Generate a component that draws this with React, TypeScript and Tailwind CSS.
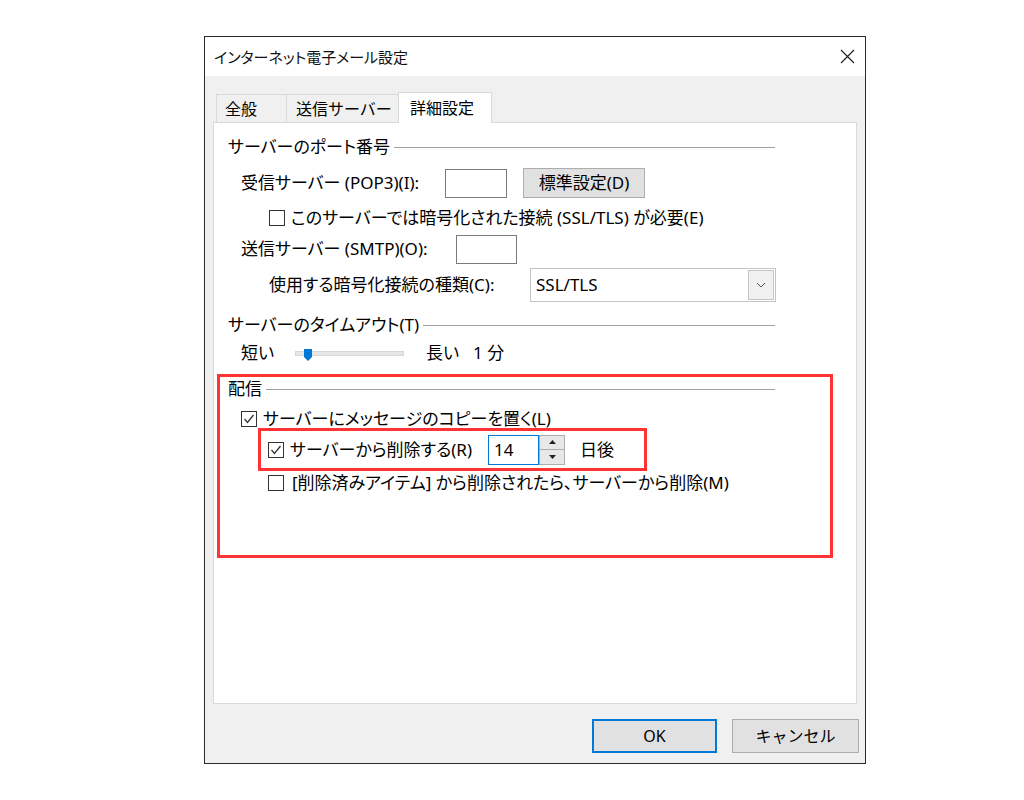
import React from 'react';

// インターネット電子メール設定 — 詳細設定タブ

function GroupHeader({ title }: { title: string }) {
  return (
    <div className="flex items-center h-[20px] w-[547px]">
      <span className="whitespace-nowrap leading-[20px]">{title}</span>
      <div className="flex-1 h-px bg-[#a0a0a0] ml-[4px]" />
    </div>
  );
}

function CheckBox({ checked = false }: { checked?: boolean }) {
  return (
    <span className="w-[16px] h-[16px] shrink-0 border border-[#333333] bg-white flex items-center justify-center">
      {checked && (
        <svg width="12" height="12" viewBox="0 0 12 12">
          <polyline points="1.5,6 4.5,9.5 10.5,2" fill="none" stroke="#333333" strokeWidth="1.3" />
        </svg>
      )}
    </span>
  );
}

export default function App() {
  return (
    <div className="w-[1024px] h-[800px] bg-white pt-[36px] pl-[204px] text-[16px] text-black font-['Noto_Sans','Noto_Sans_CJK_JP',sans-serif]">
      <div className="w-[662px] h-[728px] border border-[#2b2b2b] flex flex-col bg-[#f0f0f0]">
        {/* ── Title bar ── */}
        <div className="h-[39px] shrink-0 bg-white flex items-center justify-between pl-[9px] pr-[10px]">
          <span className="text-[15px] leading-[20px] text-[#111] [font-feature-settings:'palt']">インターネット電子メール設定</span>
          <svg width="15" height="15" viewBox="0 0 15 15">
            <path d="M1 1 L14 14 M14 1 L1 14" stroke="#222" strokeWidth="1.2" />
          </svg>
        </div>

        {/* ── Tabs + panel ── */}
        <div className="flex flex-col px-[8px] pt-[16px]">
          <div className="flex items-end h-[30px] pl-[3px]">
            <div className="h-[28px] w-[71px] border-t border-l border-r border-[#d9d9d9] pl-[8px] flex items-center leading-[20px]">全般</div>
            <div className="h-[28px] w-[111px] border-t border-[#d9d9d9] pl-[9px] flex items-center leading-[20px] whitespace-nowrap">送信サーバー</div>
            <div className="relative z-10 h-[31px] -mb-[1px] w-[94px] border-t border-l border-r border-[#d9d9d9] bg-white pl-[11px] flex items-center leading-[20px] whitespace-nowrap">詳細設定</div>
          </div>

          <div className="h-[582px] border border-[#d9d9d9] bg-white text-[17px] [font-feature-settings:'palt']">
            <div className="flex flex-col pl-[14px] pt-[14px]">
              <GroupHeader title="サーバーのポート番号" />

              <div className="flex items-center h-[30px] mt-[11px] pl-[13px]">
                <span className="w-[204px] whitespace-nowrap">受信サーバー (POP3)(I):</span>
                <span className="w-[62px] h-[29px] border border-[#7a7a7a] bg-white" />
                <button className="ml-[16px] w-[122px] h-[30px] bg-[#e1e1e1] border border-[#adadad] leading-[20px]">標準設定(D)</button>
              </div>

              <div className="flex items-center h-[20px] mt-[10px] pl-[41px]">
                <CheckBox />
                <span className="ml-[6px] whitespace-nowrap">このサーバーでは暗号化された接続 (SSL/TLS) が必要(E)</span>
              </div>

              <div className="flex items-center h-[30px] mt-[6px] pl-[13px]">
                <span className="w-[215px] whitespace-nowrap">送信サーバー (SMTP)(O):</span>
                <span className="w-[61px] h-[29px] border border-[#7a7a7a] bg-white" />
              </div>

              <div className="flex items-center h-[34px] mt-[4px] pl-[41px]">
                <span className="w-[261px] whitespace-nowrap">使用する暗号化接続の種類(C):</span>
                <div className="w-[246px] h-[34px] border border-[#c4c4c4] bg-white flex items-center">
                  <span className="flex-1 pl-[5px]">SSL/TLS</span>
                  <span className="w-[26px] h-[30px] mr-[1px] border border-[#c4c4c4] bg-[#f0f0f0] flex items-center justify-center">
                    <svg width="10" height="6" viewBox="0 0 10 6">
                      <polyline points="1,1 5,5 9,1" fill="none" stroke="#555" strokeWidth="1" />
                    </svg>
                  </span>
                </div>
              </div>

              <div className="mt-[13px]">
                <GroupHeader title="サーバーのタイムアウト(T)" />
              </div>

              <div className="flex items-center h-[20px] mt-[8px] pl-[13px]">
                <span className="w-[54px]">短い</span>
                <div className="relative w-[109px] h-[5px] bg-[#e7e7e7] border border-[#d6d6d6]">
                  <svg className="absolute left-[8px] -top-[3px]" width="8" height="12" viewBox="0 0 8 12">
                    <polygon points="0,0 8,0 8,8 4,12 0,8" fill="#0078d7" />
                  </svg>
                </div>
                <span className="ml-[22px]">長い</span>
                <span className="ml-[14px] whitespace-nowrap">1 分</span>
              </div>

              {/* ── 配信 (highlighted) ── */}
              <div className="mt-[11px] -ml-[11px] w-[616px] h-[184px] border-[3px] border-[#ff3333] pl-[8px] pt-[2px] flex flex-col">
                <GroupHeader title="配信" />

                <div className="flex items-center h-[18px] mt-[11px] pl-[13px]">
                  <CheckBox checked />
                  <span className="ml-[6px] whitespace-nowrap">サーバーにメッセージのコピーを置く(L)</span>
                </div>

                <div className="ml-[30px] w-[389px] h-[43px] shrink-0 border-[3px] border-[#ff3333] flex items-center pl-[7px]">
                  <CheckBox checked />
                  <span className="ml-[6px] w-[198px] whitespace-nowrap">サーバーから削除する(R)</span>
                  <div className="flex h-[30px]">
                    <span className="w-[51px] h-[30px] border border-[#0078d7] bg-white pl-[5px] flex items-center">14</span>
                    <div className="w-[26px] h-[30px] flex flex-col">
                      <span className="h-[15px] border border-[#adadad] bg-[#e8e8e8] flex items-center justify-center">
                        <svg width="7" height="4" viewBox="0 0 7 4"><polygon points="0,4 7,4 3.5,0" fill="#222" /></svg>
                      </span>
                      <span className="h-[15px] border border-t-0 border-[#adadad] bg-[#e8e8e8] flex items-center justify-center">
                        <svg width="7" height="4" viewBox="0 0 7 4"><polygon points="0,0 7,0 3.5,4" fill="#222" /></svg>
                      </span>
                    </div>
                  </div>
                  <span className="ml-[15px] whitespace-nowrap">日後</span>
                </div>

                <div className="flex items-center h-[20px] mt-[2px] pl-[40px]">
                  <CheckBox />
                  <span className="ml-[8px] whitespace-nowrap">[削除済みアイテム] から削除されたら、サーバーから削除(M)</span>
                </div>
              </div>
            </div>
          </div>
        </div>

        {/* ── Footer buttons ── */}
        <div className="flex justify-end gap-[15px] pr-[6px] pt-[15px]">
          <button className="w-[125px] h-[34px] bg-[#e1e1e1] border-2 border-[#0078d7] leading-[20px]">OK</button>
          <button className="w-[127px] h-[34px] bg-[#e1e1e1] border border-[#adadad] leading-[20px]">キャンセル</button>
        </div>
      </div>
    </div>
  );
}
